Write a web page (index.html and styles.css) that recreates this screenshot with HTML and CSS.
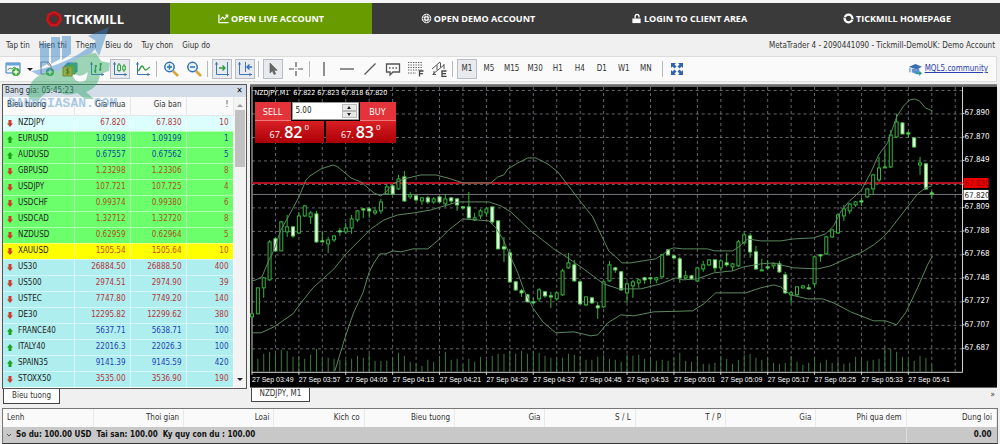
FILE: index.html
```html
<!DOCTYPE html>
<html lang="vi">
<head>
<meta charset="utf-8">
<meta name="viewport" content="width=device-width, initial-scale=1">
<title>Tickmill WebTrader</title>
<link rel="stylesheet" href="styles.css">
</head>
<body>
<header class="topbar">
  <a class="brand" href="#"><svg class="brand-mark" viewBox="0 0 16 16"><path d="M8 1.2 13.6 4.3 14.6 9.5 10.8 14.3 5 14.3 1.3 9.3 2.6 3.8z" fill="none" stroke="#c9151b" stroke-width="2.6"/><path d="M8 3.5 12 5.6 12.5 9 9.8 12.4 5.8 12.2 3.6 9 4.4 5.4z" fill="none" stroke="#a50d13" stroke-width="1.4"/></svg><span>TICKMILL</span></a>
  <a class="nav nav-live" href="#"><svg class="ni" viewBox="0 0 12 12"><path d="M1 1.5v9h10.5M2.5 7.5l2.500-3 2 2 3.500-4M8 2.300h2.600v2.600" fill="none" stroke="#fff" stroke-width="1.300"/></svg>OPEN LIVE ACCOUNT</a>
  <a class="nav nav-demo" href="#"><svg class="ni" viewBox="0 0 12 12"><g fill="none" stroke="#fff"><circle cx="6" cy="6" r="4.7" stroke-width="1"/><circle cx="6" cy="6" r="2.2" stroke-width="1"/><path d="M4.5 1.5v9M7.5 1.5v9M1.5 4.5h9M1.5 7.5h9" stroke-width=".8"/></g></svg>OPEN DEMO ACCOUNT</a>
  <a class="nav nav-login" href="#"><svg class="ni" viewBox="0 0 12 12"><path d="M1.5 6h9v5h-9z" fill="#fff"/><path d="M4.5 6V3.8a2.1 2.1 0 0 1 4.3 0V5" fill="none" stroke="#fff" stroke-width="1.4"/></svg>LOGIN TO CLIENT AREA</a>
  <a class="nav nav-home" href="#"><svg class="ni" viewBox="0 0 12 12"><circle cx="6" cy="6" r="4.2" fill="none" stroke="#fff" stroke-width="2.6"/><path d="M.5 4.5 3.5 5.5M11.5 7.5 8.5 6.5" stroke="#3a3a3a" stroke-width=".8"/></svg>TICKMILL HOMEPAGE</a>
</header>

<div class="menubar">
  <nav class="menus"><button>Tap tin</button><button>Hien thi</button><button>Them</button><button>Bieu do</button><button>Tuy chon</button><button>Giup do</button></nav>
  <span class="account">MetaTrader 4 - 2090441090 - Tickmill-DemoUK: Demo Account</span>
</div>

<div class="toolbar">
  <button class="tb drop" aria-label="New chart"><svg viewBox="0 0 16 16"><path d="M1 2h14v10H1z" fill="#eef6ff" stroke="#3c76b4"/><path d="M1 2h14v2.5H1z" fill="#6aa3d8"/><path d="M2.5 9l2.500-2 2 1 2-2 2 1" fill="none" stroke="#5a9a50"/><circle cx="11" cy="11" r="4" fill="#41a839"/><path d="M11 8.500v5M8.500 11h5" stroke="#fff" stroke-width="1.400"/></svg><i class="caret"></i></button>
  <button class="tb" aria-label="New order"><svg viewBox="0 0 16 16"><path d="M2 1h7l3 3v9H2z" fill="#f7f7f7" stroke="#8c8c8c"/><path d="M9 1v3h3" fill="none" stroke="#8c8c8c"/><circle cx="11" cy="11" r="4" fill="#41a839"/><path d="M11 8.500v5M8.500 11h5" stroke="#fff" stroke-width="1.400"/></svg></button>
  <button class="tb" aria-label="Trade"><svg viewBox="0 0 16 16"><path d="M5 2h10v9H5z" fill="#5aa0d0" stroke="#3b7fae"/><path d="M3 4h10v9H3z" fill="#5cb85c" stroke="#3c8c3c"/><path d="M1 6h9v9H1z" fill="#e4b62c" stroke="#a67c12"/><path d="M7.500 8.500c-1.200-1-3.500-.7-3.300.6.300 1.300 3.200.8 3.200 2.200 0 1.200-2.400 1.400-3.400.4M5.600 7.500v6" fill="none" stroke="#6b4d05"/></svg></button>
  <span class="space"></span>
  <button class="tb" aria-label="Bar chart"><svg viewBox="0 0 16 16"><path d="M2.500 1v12.500H15M1 3h3M13 12v3" fill="none" stroke="#3c76b4"/><path d="M6.500 4v8M5 10h1.500M6.500 5H8M11.500 2v8M10 8.500h1.500M11.500 3H13" fill="none" stroke="#2f9a3b" stroke-width="1.400"/></svg></button>
  <button class="tb on" aria-label="Candles"><svg viewBox="0 0 16 16"><path d="M2.500 1v12.500H15M1 3h3M13 12v3" fill="none" stroke="#3c76b4"/><path d="M7 2v9M12 3v8" stroke="#2f9a3b"/><path d="M5.700 4h2.800v5.500H5.700zM10.700 5h2.600v4h-2.600z" fill="#d8f5d8" stroke="#2f9a3b"/></svg></button>
  <button class="tb" aria-label="Line chart"><svg viewBox="0 0 16 16"><path d="M2.500 1v12.500H15M1 3h3M13 12v3" fill="none" stroke="#3c76b4"/><path d="M3 10c2-1 2.500-5 4-5s2 4 3.500 4S13 7 15 6" fill="none" stroke="#2f9a3b" stroke-width="1.300"/></svg></button>
  <span class="sep"></span>
  <button class="tb" aria-label="Zoom in"><svg viewBox="0 0 16 16"><path d="M10 10l5 5" stroke="#d9a441" stroke-width="2.600"/><circle cx="6.500" cy="6" r="4.700" fill="#e8f3fd" stroke="#2f6fb5" stroke-width="1.500"/><path d="M6.500 3.500v5M4 6h5" stroke="#2f6fb5" stroke-width="1.500"/></svg></button>
  <button class="tb" aria-label="Zoom out"><svg viewBox="0 0 16 16"><path d="M10 10l5 5" stroke="#d9a441" stroke-width="2.600"/><circle cx="6.500" cy="6" r="4.700" fill="#e8f3fd" stroke="#2f6fb5" stroke-width="1.500"/><path d="M4 6h5" stroke="#2f6fb5" stroke-width="1.500"/></svg></button>
  <span class="sep"></span>
  <button class="tb on" aria-label="Auto scroll"><svg viewBox="0 0 16 16"><path d="M2.500 1v12.500H15M1 3h3M13.500 1v14" fill="none" stroke="#3c76b4"/><path d="M5 7h6M8.500 4.500 11 7 8.500 9.500" fill="none" stroke="#2f9a3b" stroke-width="1.400"/></svg></button>
  <button class="tb on" aria-label="Chart shift"><svg viewBox="0 0 16 16"><path d="M2.500 1v12.500H15M1 3h3M13 12v3M8.500 1v10" fill="none" stroke="#3c76b4"/><path d="M10 6h5M12.500 3.500 10 6l2.500 2.500" fill="none" stroke="#2f6fd0" stroke-width="1.400"/></svg></button>
  <span class="sep"></span>
  <button class="tb on" aria-label="Cursor"><svg viewBox="0 0 16 16"><path d="M5 2v10l2.400-2.200L9 13.500l1.600-.7L9 9.300h3.200z" fill="#666" stroke="#555" stroke-width=".6"/></svg></button>
  <button class="tb" aria-label="Crosshair"><svg viewBox="0 0 16 16"><path d="M8 1v5M8 10v5M1 8h5M10 8h5M7.500 8h1" stroke="#555" stroke-width="1.200"/></svg></button>
  <span class="sep"></span>
  <button class="tb" aria-label="Vertical line"><svg viewBox="0 0 16 16"><path d="M8 1v14" stroke="#555" stroke-width="1.300"/></svg></button>
  <button class="tb" aria-label="Horizontal line"><svg viewBox="0 0 16 16"><path d="M1 8h14" stroke="#555" stroke-width="1.300"/></svg></button>
  <button class="tb" aria-label="Trend line"><svg viewBox="0 0 16 16"><path d="M2.500 13.500l11-11" stroke="#555" stroke-width="1.300"/></svg></button>
  <button class="tb" aria-label="Text"><svg viewBox="0 0 16 16"><path d="M1.500 3h13v8H8l-3 3v-3H1.500z" fill="none" stroke="#555" stroke-width="1.300"/><path d="M4 7h1.500M7.300 7h1.500M10.500 7H12" stroke="#555" stroke-width="1.500"/></svg></button>
  <button class="tb" aria-label="Fibonacci"><svg viewBox="0 0 16 16"><path d="M0 1.500h14M0 4h14M0 6.500h14M0 9h14M0 12h8" stroke="#555" stroke-width="1.200" stroke-dasharray="1.300 1.200"/><path d="M11.500 15.500v-5.500h4M11.500 12.700h3.300" fill="none" stroke="#444" stroke-width="1.300"/></svg></button>
  <button class="tb" aria-label="Channels"><svg viewBox="0 0 16 16"><path d="M1 8l8-7M2 13 13 4M3 10v4M1.500 13.500H5M6 4v5M9.500 1.500v5M13 3v5" fill="none" stroke="#555"/><path d="M15.500 10H11v5.400h4.500M11 12.700h4" fill="none" stroke="#444" stroke-width="1.300"/></svg></button>
  <span class="sep"></span>
  <div class="frames"><button class="tf on">M1</button><button class="tf">M5</button><button class="tf">M15</button><button class="tf">M30</button><button class="tf">H1</button><button class="tf">H4</button><button class="tf">D1</button><button class="tf">W1</button><button class="tf">MN</button></div>
  <span class="sep"></span>
  <button class="tb" aria-label="Full screen"><svg viewBox="0 0 16 16"><g fill="#2f62b0"><path d="M2 2h5L5.500 3.500 7.500 5.500 5.500 7.500 3.500 5.500 2 7z"/><path d="M14 2v5l-1.500-1.500-2 2-2-2 2-2L9 2z"/><path d="M2 14V9l1.500 1.500 2-2 2 2-2 2L7 14z"/><path d="M14 14H9l1.500-1.500-2-2 2-2 2 2L14 9z"/></g></svg></button>
  <a class="community" href="#"><svg viewBox="0 0 14 14"><path d="M0 4 7 1l7 3-6 3z" fill="#3a6fb2"/><path d="M3 6v4l5 2 3-2V5L8 7z" fill="#5b92cf"/><path d="M1 5v5" stroke="#3a6fb2"/><path d="M8 10h3V8l3 3-3 3v-2H8z" fill="#2f9a8a"/></svg><span>MQL5.community</span></a>
</div>

<main class="work">
  <section class="watch">
    <div class="watch-frame">
      <div class="watch-title"><span>Bang gia: 05:45:23</span><button class="close" aria-label="Close">✕</button></div>
      <div class="watch-body">
        <table class="quotes">
          <colgroup><col class="c-sym"><col class="c-px"><col class="c-px"><col class="c-sp"></colgroup>
          <thead><tr><th>Bieu tuong</th><th>Gia mua</th><th>Gia ban</th><th>!</th></tr></thead>
          <tbody id="quotes"></tbody>
        </table>
        <div class="scroll"><i class="up"></i><b class="thumb"></b><i class="down"></i></div>
      </div>
    </div>
    <button class="tab">Bieu tuong</button>
  </section>

  <section class="chart">
    <div class="chart-frame">
      <svg class="plot" id="plot" viewBox="249 85 748 302" role="img" aria-label="NZDJPY M1"></svg>
      <div class="ticker">NZDJPY,M1&nbsp; 67.822 67.823 67.818 67.820</div>
      <form class="trade">
        <div class="trade-top">
          <button type="button" class="side">SELL</button>
          <div class="volume"><input type="text" value="5.00" aria-label="Volume"><div class="steps"><button type="button" aria-label="Increase"><i class="up"></i></button><button type="button" aria-label="Decrease"><i class="down"></i></button></div></div>
          <button type="button" class="side">BUY</button>
        </div>
        <div class="trade-prices">
          <div class="px"><small>67.</small><b>82</b><sup>0</sup></div>
          <div class="px"><small>67.</small><b>83</b><sup>0</sup></div>
        </div>
      </form>
    </div>
    <div class="chart-tabs"><button class="tab">NZDJPY, M1</button><span class="more">»</span></div>
  </section>
</main>

<section class="orders">
  <table>
    <thead><tr><th>Lenh</th><th>Thoi gian</th><th>Loai</th><th>Kich co</th><th>Bieu tuong</th><th>Gia</th><th>S / L</th><th>T / P</th><th>Gia</th><th>Phi qua dem</th><th>Dung loi</th></tr></thead>
    <tbody><tr><td colspan="10"><svg class="chev" viewBox="0 0 6 4"><path d="M1 1l2 2 2-2" fill="none" stroke="#555"/></svg>So du: 100.00 USD&nbsp; Tai san: 100.00&nbsp; Ky quy con du : 100.00</td><td>0.00</td></tr></tbody>
  </table>
</section>
<div class="foot-tab"></div>

<div class="watermark" aria-hidden="true">
  <svg viewBox="0 0 94 74"><g fill="#2f7fc4"><path d="M12 16h9v20l-9 5zM23 10h9v22l-9 5zM34 9h9v18l-9 6z"/><path d="M3 44C30 40 55 27 68 14L60 9 81 0 71 29 67 22C54 38 34 48 10 48z"/></g><g fill="#2fa866"><path d="M0 66C2 50 16 43 30 44c14-8 24-18 38-18l5 8 9 2-1 8-9 3c-1 10-6 15-14 18l8 7h-9l-8-6c-8 3-16 2-20-3-9 1-16 5-19 12C3 74 0 71 0 66zM44 44c4 6 10 6 16 1l-2 8c-6 4-13 2-14-9z" fill-rule="evenodd"/></g></svg>
  <span>DANHGIASAN.COM</span>
</div>
<script src="app.js"></script>
</body>
</html>
```
FILE: styles.css
```css
* { box-sizing: border-box; }
body { margin: 0; background: #f0f0f0; color: #333; font: 8px/10px "DejaVu Sans Condensed", "DejaVu Sans", sans-serif; position: relative; }
button, input { font: inherit; color: inherit; margin: 0; padding: 0; border: 0; background: none; }
a { color: inherit; text-decoration: none; }
svg { display: block; }

.topbar { display: flex; height: 34px; border-top: 3px solid #f4f4f4; background: #3a3a3a; color: #fff; font: 700 9px/14px "Open Sans", "Noto Sans", sans-serif; }
.brand, .nav { display: flex; align-items: center; justify-content: center; gap: 2px; }
.brand { flex: 170; font-size: 13px; }
.brand-mark { width: 16px; height: 16px; }
.ni { width: 11px; height: 11px; }
.nav-live { flex: 202; background: #679b00; }
.nav-demo { flex: 212; }
.nav-login { flex: 210; }
.nav-home { flex: 206; }

.menubar { display: flex; justify-content: space-between; align-items: center; height: 22px; padding: 2px 5px 0 6px; }
.menus { display: flex; gap: 9px; }

.toolbar { display: flex; align-items: center; gap: 3px; height: 26px; margin: 0 3px 2px 0; padding: 0 8px 0 3px; background: #fafafa; border: solid #dcdcdc; border-width: 1px 1px 1px 0; }
.tb { display: flex; align-items: center; justify-content: center; width: 20px; height: 20px; }
.tb svg { width: 16px; height: 16px; }
.drop { width: 31px; justify-content: flex-start; gap: 6px; padding-left: 2px; }
.caret, .up, .down { width: 0; height: 0; border: solid transparent; border-width: 3px 3px 0; border-top-color: #222; }
.up { border-width: 0 3px 3px; border-bottom-color: #222; }
.on { background: #e9eaee; border: 1px solid #b9bcc6; }
.space { width: 1px; }
.sep { width: 2px; height: 16px; border-left: 1px solid #b8b8b8; }
.frames { display: flex; gap: 2px; margin-right: 3px; }
.tf { min-width: 20px; height: 20px; padding: 0 3px; }
.community { display: flex; align-items: center; gap: 3px; margin-left: auto; color: #2a3fb0; text-decoration: underline; }
.community svg { width: 13px; height: 13px; }

.work { display: flex; align-items: flex-start; gap: 3px; padding: 0 3px 0 2px; }
.watch { flex: 0 0 244px; }
.watch-frame { border: 1px solid #555; background: #fafafa; }
.watch-title { display: flex; justify-content: space-between; align-items: center; height: 12px; padding: 0 3px 0 2px; background: #d2dde9; }
.close { font-size: 8px; color: #000; font-weight: 700; }
.watch-body { display: flex; }
.quotes { flex: 0 0 230px; border-collapse: collapse; table-layout: fixed; width: 230px; }
.c-sym { width: 71px; }
.c-px { width: 56px; }
.c-sp { width: 47px; }
.quotes th, .quotes td { height: 16px; padding: 0 4px; text-align: right; font-weight: 400; border: solid rgba(255, 255, 255, .45); border-width: 0 1px 1px 0; }
.quotes th { height: 18px; padding-bottom: 2px; border-color: #e6e6e6; }
.quotes th:first-child, .quotes td:first-child { text-align: left; color: #222; }
.sym { display: flex; align-items: center; gap: 5px; }
.sym svg { width: 6px; height: 7px; }
.now { background: #dcfffd; }
.fx { background: #6cff6c; }
.gold { background: #ffff00; }
.cfd { background: #afeeee; }
.falling { color: #b5333a; }
.rising { color: #1c3fb4; }
.fx.falling { color: #a8501e; }
.fx.rising { color: #0a4a98; }
.gold.falling { color: #c84a10; }
.scroll { flex: 1; display: flex; flex-direction: column; align-items: center; padding: 7px 1px; background: #f3f3f3; }
.scroll .up { border-bottom-color: #999; margin-bottom: 3px; }
.thumb { width: 10px; height: 57px; background: #c1c1c1; }
.scroll .down { margin-top: auto; margin-bottom: 0; }
.tab { display: block; height: 15px; margin-left: 1px; padding: 0 8px; background: #fff; border: 1px solid #444; border-top: 0; }

.chart { flex: 1; min-width: 0; }
.chart-frame { position: relative; background: #000; border-top: 1px solid #888; border-bottom: 1px solid #666; color: #fff; }
.plot { width: 100%; height: auto; }
.plot text { fill: #fff; }
.grid { stroke: #8a8a94; stroke-width: 1; stroke-dasharray: 3 3; opacity: .75; }
.frame { stroke: #d8d8d8; fill: none; }
.band { fill: none; stroke: #5b8a5f; stroke-width: 1; }
.vol { stroke: #3c7a40; stroke-width: 1; }
.wick { stroke: #35b53d; stroke-width: 1; }
.hollow { fill: #000; stroke: #35b53d; stroke-width: 1; }
.solid { fill: #ecffe6; stroke: #5fd45f; stroke-width: 1; }
.ask { stroke: #b5101f; stroke-width: 2; }
.bid { stroke: #77777f; stroke-width: 1; }
.price { font-size: 8px; }
.time { font: 7px "Liberation Sans", sans-serif; }
.plot .ask-label { fill: #8a0000; }
.plot .bid-label { fill: #222; }
.ticker { position: absolute; left: 5px; top: 3px; font-size: 7px; }
.trade { position: absolute; left: 5px; top: 17px; width: 141px; }
.trade-top { display: flex; height: 19px; }
.side { flex: 0 0 36px; background: #e2343a; font-size: 9px; color: #fff; box-shadow: inset 0 -1px #f0797c; }
.volume { flex: 1; display: flex; height: 18px; margin: 0 1px; padding: 1px; background: #fff; border: 1px solid #999; color: #222; }
.volume input { flex: 1; width: 20px; min-width: 0; padding-left: 2px; outline: 0; }
.steps { display: grid; width: 15px; gap: 0; }
.steps button { display: flex; align-items: center; justify-content: center; background: #e8e8e8; border: 1px solid #bbb; }
.steps .up, .steps .down { border-left-width: 2px; border-right-width: 2px; }
.trade-prices { display: flex; gap: 2px; }
.px { flex: 1; display: flex; align-items: flex-end; justify-content: center; gap: 2px; height: 22px; padding-bottom: 3px; background: linear-gradient(#d81f24, #ab0006); font-family: "Open Sans", sans-serif; }
.px small { font-size: 9px; line-height: 10px; }
.px b { font-size: 16px; line-height: 16px; font-weight: 600; }
.px sup { font-size: 8px; line-height: 8px; align-self: flex-start; padding-top: 2px; }
.chart-tabs { display: flex; justify-content: space-between; align-items: center; }
.chart-tabs .tab { height: 14px; }
.more { padding-right: 2px; }

.orders { margin: 4px 2px 0; border: 1px solid #777; border-bottom-color: #333; }
.orders table { width: 100%; table-layout: fixed; border-collapse: collapse; }
.orders th { height: 18px; padding: 0 4px; background: #fafafa; border-right: 1px solid #e9e9e9; text-align: right; font-weight: 400; }
.orders th:first-child { text-align: left; }
.orders td { height: 16px; padding: 0 5px; background: #c8c8c8; color: #111; font-weight: 700; text-align: right; }
.orders td:first-child { text-align: left; border-right: 1px solid #ddd; padding-left: 3px; }
.chev { display: inline-block; width: 6px; height: 4px; margin-right: 4px; }
.foot-tab { width: 50px; height: 1px; margin-left: 3px; background: #fff; }

.watermark { position: absolute; left: 8px; top: 27px; pointer-events: none; opacity: .45; }
.watermark svg { width: 94px; height: 74px; margin-left: 20px; }
.watermark span { display: block; margin-top: -5px; font: 700 13px/16px "Liberation Mono", monospace; color: #4a90cf; }
```
FILE: app.js
```js
const rows = [
  ['NZDJPY', '67.820', '67.830', '10', 'now', 0], ['EURUSD', '1.09198', '1.09199', '1', 'fx', 1],
  ['AUDUSD', '0.67557', '0.67562', '5', 'fx', 1], ['GBPUSD', '1.23298', '1.23306', '8', 'fx', 0],
  ['USDJPY', '107.721', '107.725', '4', 'fx', 0], ['USDCHF', '0.99374', '0.99380', '6', 'fx', 0],
  ['USDCAD', '1.32712', '1.32720', '8', 'fx', 0], ['NZDUSD', '0.62959', '0.62964', '5', 'fx', 0],
  ['XAUUSD', '1505.54', '1505.64', '10', 'gold', 0], ['US30', '26884.50', '26888.50', '400', 'cfd', 0],
  ['US500', '2974.51', '2974.90', '39', 'cfd', 0], ['USTEC', '7747.80', '7749.20', '140', 'cfd', 0],
  ['DE30', '12295.82', '12299.62', '380', 'cfd', 0], ['FRANCE40', '5637.71', '5638.71', '100', 'cfd', 1],
  ['ITALY40', '22016.3', '22026.3', '100', 'cfd', 1], ['SPAIN35', '9141.39', '9145.59', '420', 'cfd', 1],
  ['STOXX50', '3535.00', '3536.90', '190', 'cfd', 0]
];
document.getElementById('quotes').innerHTML = rows.map(([s, a, b, n, kind, up]) =>
  `<tr class="${kind} ${up ? 'rising' : 'falling'}"><td><span class="sym"><svg viewBox="0 0 6 7">${up
    ? '<path d="M3 0 6 3.500H4.500V7h-3V3.500H0z" fill="#1ea01e"/>'
    : '<path d="M3 7 0 3.500h1.500V0h3v3.500H6z" fill="#cf3a2c"/>'}</svg>${s}</span></td><td>${a}</td><td>${b}</td><td>${n}</td></tr>`).join('');

// Candles: body top, body bottom, wick top, wick bottom, 1 when the body is filled.
const candles = [
  [314,317,314,317,0],[288,314,288,314,0],[278,288,277,298,0],[242,280,240,281,0],[239,251,237,252,1],[222,251,221,251,0],
  [227,232,215,237,0],[227,236,226,238,1],[216,233,212,234,0],[206,216,205,217,0],[213,217,211,224,0],[214,242,211,243,1],
  [241,242,232,242,1],[240,244,237,253,0],[236,240,235,242,0],[231,231,228,236,1],[228,232,223,234,0],[219,228,215,234,0],
  [211,220,210,222,0],[209,210,208,218,1],[209,211,207,218,1],[211,213,207,215,0],[202,211,199,214,0],[187,194,184,195,0],
  [186,194,185,195,1],[179,189,175,190,0],[177,201,171,202,1],[195,197,192,199,0],[196,200,195,201,1],[198,201,197,205,0],
  [198,202,196,204,1],[199,202,197,204,0],[197,202,197,203,1],[199,204,194,207,0],[198,201,197,204,1],[199,205,198,211,1],
  [207,207,206,209,1],[207,218,192,218,1],[218,220,213,221,0],[211,216,209,219,0],[209,213,207,217,0],[207,222,207,224,1],
  [221,249,221,249,1],[247,249,237,262,1],[253,282,249,283,1],[282,290,281,291,1],[291,293,289,297,1],[295,302,294,302,1],
  [302,302,298,304,1],[290,299,288,302,0],[292,296,291,298,1],[296,297,292,308,1],[293,299,292,301,0],[271,295,269,296,0],
  [263,268,253,269,0],[265,281,260,282,1],[282,304,281,304,1],[297,305,297,306,0],[298,303,298,304,1],[306,308,302,319,1],
  [282,307,281,308,0],[265,281,261,282,0],[268,270,267,273,1],[272,290,271,291,1],[284,293,282,303,0],[282,286,280,298,0],
  [280,283,279,288,0],[278,280,277,284,1],[278,278,277,284,1],[278,280,277,283,0],[255,277,254,278,0],[250,255,249,255,1],
  [256,258,255,260,1],[259,278,257,283,1],[276,278,271,279,0],[276,279,275,280,1],[268,281,267,282,0],[265,269,261,272,0],
  [260,265,259,266,0],[260,268,260,272,1],[261,268,259,271,0],[263,265,253,267,1],[264,267,263,271,0],[242,266,240,267,0],
  [235,243,233,244,0],[236,252,233,258,1],[252,269,246,270,1],[270,270,259,271,0],[267,268,260,270,1],[264,266,263,269,0],
  [264,272,261,273,1],[275,293,272,294,1],[293,295,291,303,0],[287,295,287,296,0],[286,288,285,289,0],[288,289,284,290,1],
  [257,284,256,287,0],[255,256,254,262,1],[237,254,236,255,0],[230,237,229,238,0],[215,233,214,234,0],[209,216,205,221,0],
  [204,211,203,214,0],[202,205,201,207,0],[201,202,198,206,1],[189,197,188,198,0],[175,189,174,195,0],[168,180,157,182,0],
  [167,167,150,168,0],[135,167,130,168,0],[122,137,114,138,0],[123,134,122,134,1],[133,134,131,138,1],[138,147,137,148,1],
  [163,165,157,175,0],[164,189,163,190,1],[193,194,191,199,1]
];
const volumes = [26,13,18,20,18,22,21,15,16,13,17,23,13,14,13,12,12,13,16,14,18,11,11,11,14,19,16,10,8,6,12,10,16,20,12,13,7,13,10,15,12,16,18,18,21,18,21,18,21,19,16,14,13,14,18,17,16,12,12,15,17,13,12,10,17,16,17,13,12,11,12,11,14,19,11,10,16,8,8,9,16,13,8,12,17,18,14,12,14,9,8,9,16,10,7,9,15,9,12,9,12,8,9,15,13,11,12,13,25,23,20,15,12,11,16,14,7];
const bands = [
  '251,281 255,280 261,277 268,260 273,250 280,230 290,212 298,197 305,180 309,176 320,169 332,165 337,167 350,178 360,182 373,193 380,196 385,192 392,184 403,179 420,175 435,175 450,179 462,183 490,183 497,177 503,175 507,169 517,163 527,158 535,158 547,164 557,172 567,185 580,202 592,217 598,230 608,251 615,257 621,263 630,263 642,261 655,259 663,254 667,250 673,248 682,249 707,249 714,251 732,251 738,247 747,239 760,241 780,241 793,239 813,238 825,234 833,226 840,212 848,202 861,190 870,173 878,155 887,143 896,117 903,106 909,100 914,99 919,101 925,108 932,111',
  '251,333 260,333 273,327 292,314 300,303 312,288 322,279 333,269 345,254 357,242 370,229 383,220 397,215 413,213 430,210 440,207 457,202 488,202 500,206 510,212 530,231 553,249 567,258 580,267 603,284 618,289 640,289 660,284 675,278 682,280 697,279 713,273 732,271 743,267 760,264 773,263 780,265 793,268 817,269 830,266 843,260 860,253 873,245 883,237 890,229 907,207 917,194 925,188 931,186',
  '334,371 345,335 353,312 362,293 368,273 373,263 379,254 385,254 392,251 400,252 412,249 427,249 440,238 448,230 462,219 488,221 495,228 502,239 508,253 517,273 523,290 532,308 542,322 555,333 573,332 590,336 597,335 607,323 620,315 633,316 653,312 692,311 703,304 715,293 745,293 760,288 773,285 780,287 790,295 807,299 822,299 833,303 850,312 873,321 885,321 896,325 905,313 917,288 927,265 932,256'
];
const plotLeft = 251, plotRight = 962, plotTop = 87, plotBase = 372, candleStep = 5.864, cell = candleStep * 4;
const line = (c, x1, y1, x2, y2) => `<line class="${c}" x1="${x1}" y1="${y1}" x2="${x2}" y2="${y2}"/>`;
let out = '';
for (let i = 1; i < 31; i++) out += line('grid', plotLeft + i * cell, plotTop, plotLeft + i * cell, plotBase);
for (let i = 0; i < 12; i++) out += line('grid', plotLeft, 90.5 + i * 23.5, plotRight, 90.5 + i * 23.5);
out += `<path class="frame" d="M${plotLeft} ${plotTop}V${plotBase + .5}H${plotRight}V${plotTop}"/>`;
out += line('frame', 249, 86, 997, 86);
volumes.forEach((v, i) => { out += line('vol', plotLeft + i * candleStep, plotBase - v, plotLeft + i * candleStep, plotBase); });
out += line('ask', plotLeft, 183, plotRight, 183) + line('bid', plotLeft, 194.5, plotRight, 194.5);
candles.forEach(([t, b, wt, wb, f], i) => {
  const x = plotLeft + i * candleStep;
  out += line('wick', x, wt, x, wb) + `<rect class="${f ? 'solid' : 'hollow'}" x="${x - 1.5}" y="${t}" width="3" height="${Math.max(b - t, 1)}"/>`;
});
bands.forEach(p => { out += `<polyline class="band" points="${p}"/>`; });
['67.890', '67.870', '67.849', '', '67.809', '67.788', '67.768', '67.748', '67.727', '67.707', '67.687'].forEach((p, i) => {
  const y = 113.5 + i * 23.5;
  out += line('frame', plotRight, y, plotRight + 2, y) + `<text class="price" x="964" y="${y + 2}">${p}</text>`;
});
out += '<rect x="963" y="178" width="25" height="10" fill="#f00000"/><text class="price ask-label" x="964" y="186">67.830</text>';
out += '<rect x="963" y="190" width="25" height="10" fill="#fff"/><text class="price bid-label" x="964" y="198">67.820</text>';
['03:49', '03:57', '04:05', '04:13', '04:21', '04:29', '04:37', '04:45', '04:53', '05:01', '05:09', '05:17', '05:25', '05:33', '05:41'].forEach((t, i) => {
  const x = plotLeft + i * cell * 2;
  out += line('frame', x, plotBase, x, plotBase + 3) + `<text class="time" x="${x}" y="382">27 Sep ${t}</text>`;
});
document.getElementById('plot').innerHTML = out;
```
